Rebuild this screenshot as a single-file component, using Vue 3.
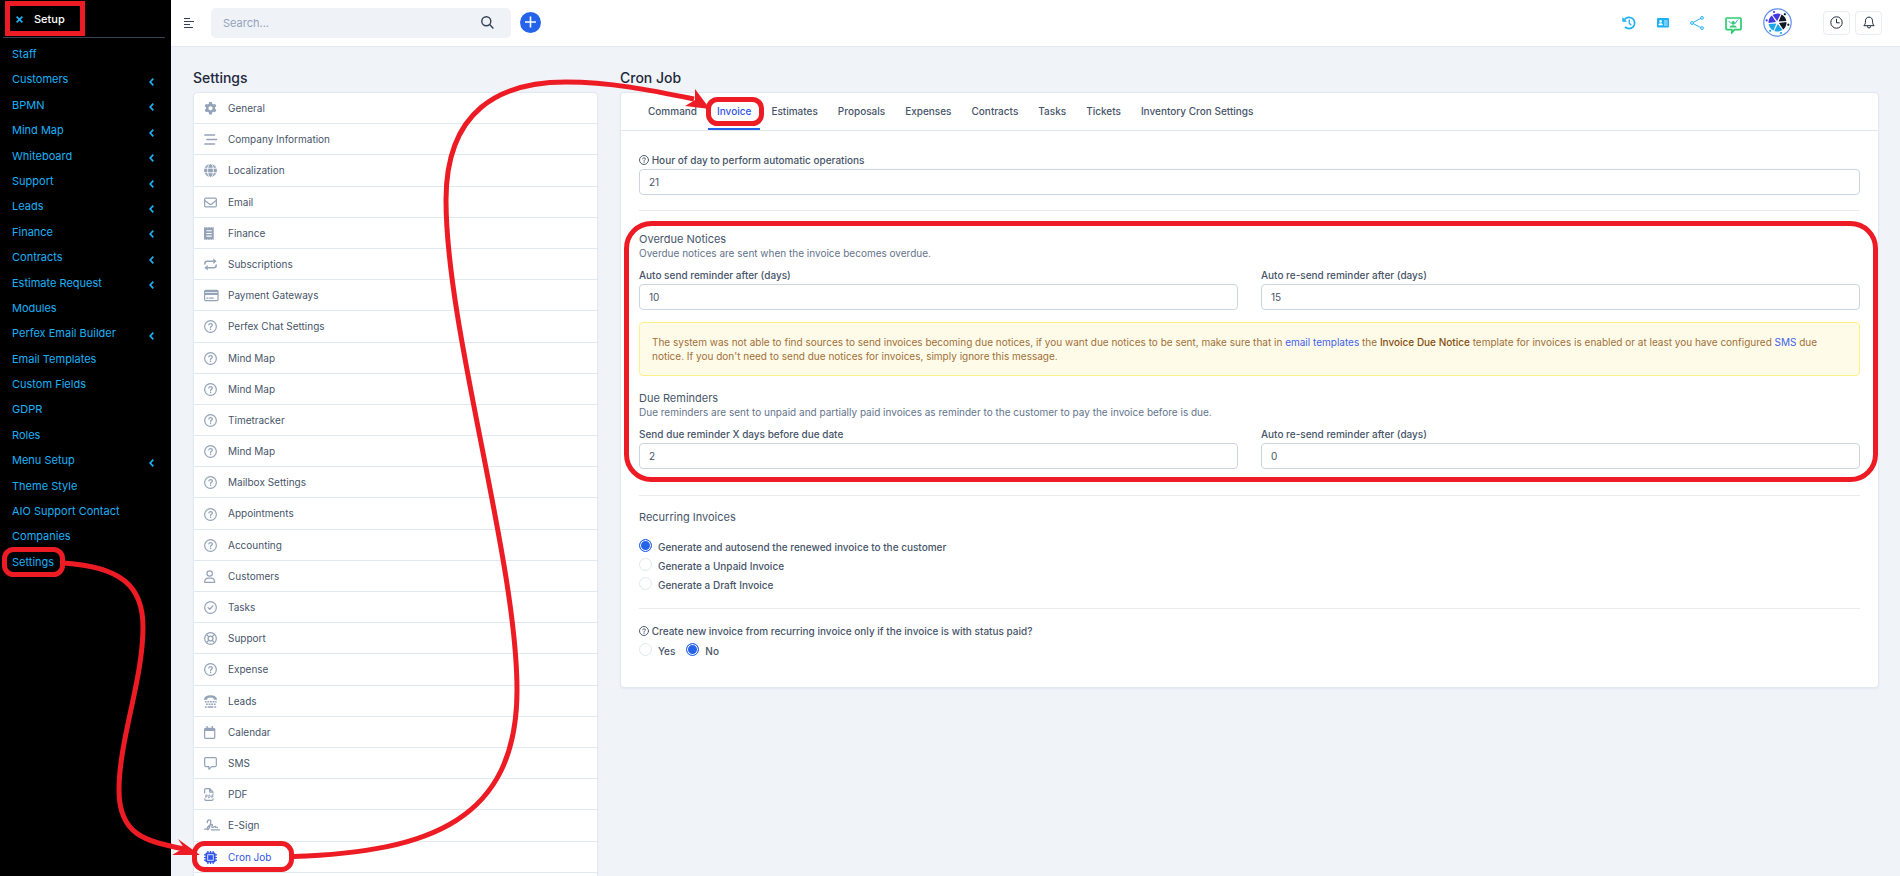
<script setup>
import { ref } from 'vue'

const menu = [
  { label: 'Staff' },
  { label: 'Customers', sub: true },
  { label: 'BPMN', sub: true },
  { label: 'Mind Map', sub: true },
  { label: 'Whiteboard', sub: true },
  { label: 'Support', sub: true },
  { label: 'Leads', sub: true },
  { label: 'Finance', sub: true },
  { label: 'Contracts', sub: true },
  { label: 'Estimate Request', sub: true },
  { label: 'Modules' },
  { label: 'Perfex Email Builder', sub: true },
  { label: 'Email Templates' },
  { label: 'Custom Fields' },
  { label: 'GDPR' },
  { label: 'Roles' },
  { label: 'Menu Setup', sub: true },
  { label: 'Theme Style' },
  { label: 'AIO Support Contact' },
  { label: 'Companies' },
  { label: 'Settings' },
]

const groups = [
  ['General', 'gear'],
  ['Company Information', 'bars'],
  ['Localization', 'globe'],
  ['Email', 'mail'],
  ['Finance', 'receipt'],
  ['Subscriptions', 'repeat'],
  ['Payment Gateways', 'card'],
  ['Perfex Chat Settings', 'help'],
  ['Mind Map', 'help'],
  ['Mind Map', 'help'],
  ['Timetracker', 'help'],
  ['Mind Map', 'help'],
  ['Mailbox Settings', 'help'],
  ['Appointments', 'help'],
  ['Accounting', 'help'],
  ['Customers', 'user'],
  ['Tasks', 'check'],
  ['Support', 'ring'],
  ['Expense', 'help'],
  ['Leads', 'tty'],
  ['Calendar', 'calendar'],
  ['SMS', 'message'],
  ['PDF', 'pdf'],
  ['E-Sign', 'sign'],
  ['Cron Job', 'chip'],
]

const line = 'fill="none" stroke="currentColor" stroke-linecap="round" stroke-linejoin="round"'
const icons = {
  gear: '<path fill="currentColor" fill-rule="evenodd" d="M6.4 0h3.2l.5 2.2 1.4.8 2.1-.7 1.6 2.8-1.6 1.5v1.8l1.6 1.5-1.6 2.8-2.1-.7-1.4.8-.5 2.7H6.4l-.5-2.7-1.4-.8-2.1.7L.8 9.9l1.6-1.5V6.600L.8 5.100l1.600-2.800 2.100.7 1.400-.8zM8 5.200a2.600 2.600 0 1 0 0 5.200 2.600 2.600 0 0 0 0-5.200z"/>',
  bars: `<g ${line} stroke-width="1.8"><path d="M1 2.500h12M3.500 8h12M1 13.500h12"/></g>`,
  globe: '<circle cx="8" cy="8" r="8" fill="currentColor"/><g fill="none" stroke="#fff" stroke-width="1.100"><ellipse cx="8" cy="8" rx="3.600" ry="8.500"/><path d="M0 5.200h16M0 10.800h16"/></g>',
  mail: `<g ${line} stroke-width="1.500"><rect x=".8" y="2.500" width="14.400" height="11" rx="1.500"/><path d="M1 5.500l5.600 4.300a2.300 2.300 0 0 0 2.800 0L15 5.500"/></g>`,
  receipt: '<path fill="currentColor" fill-rule="evenodd" d="M0 0l1.500 1L3 0l1.500 1L6 0l1.500 1L9 0l1.500 1L12 0v16l-1.500-1L9 16l-1.500-1L6 16l-1.500-1L3 16l-1.500-1L0 16zM3 4v1.300h6.500V4zm0 3.300v1.300h6.500V7.300zm0 3.300V12h6.500v-1.400z"/>',
  repeat: `<g ${line} stroke-width="1.800"><path d="M1 7.500V7a3 3 0 0 1 3-3h8M15 8.500V9a3 3 0 0 1-3 3H4"/></g><path fill="currentColor" d="M11.500.5L15.500 4l-4 3.500zM4.500 8.500L.5 12l4 3.500z"/>`,
  card: '<path fill="currentColor" fill-rule="evenodd" d="M2 1h14a2 2 0 0 1 2 2v10a2 2 0 0 1-2 2H2a2 2 0 0 1-2-2V3a2 2 0 0 1 2-2zM1.500 4v1h15V4zm0 3.500v5.500c0 .3.200.5.5.5h14c.3 0 .5-.2.5-.5V7.500zM3 10.500h2.500V12H3zm3.500 0H12V12H6.500z"/>',
  help: `<g ${line} stroke-width="1.500"><circle cx="8" cy="8" r="7.200"/><path d="M5.900 6.100c.2-1.100 1-1.600 2.200-1.600 1.300 0 2.200.7 2.200 1.800 0 1.500-2.200 1.500-2.200 3"/></g><circle cx="8.100" cy="11.500" r="1" fill="currentColor"/>`,
  user: `<g ${line} stroke-width="1.500"><circle cx="7" cy="4.300" r="3.300"/><path d="M.8 15.200c0-3 1.900-5.200 4.700-5.200h3c2.800 0 4.700 2.200 4.700 5.200z"/></g>`,
  check: `<g ${line} stroke-width="1.500"><circle cx="8" cy="8" r="7.200"/><path d="M5 8.200l2.100 2L11 6"/></g>`,
  ring: `<g ${line} stroke-width="1.500"><circle cx="8" cy="8" r="7.200"/><circle cx="8" cy="8" r="3"/><path d="M3 3l2.900 2.900M13 3l-2.900 2.900M3 13l2.900-2.900M13 13l-2.900-2.900"/></g>`,
  tty: '<path fill="currentColor" d="M0 5C.500 2 3.500.3 8 .3S15.500 2 16 5l-.5 1.200-3.600-.7-.5-1.800a9 9 0 0 0-6.800 0l-.5 1.800-3.600.7z"/><path fill="none" stroke="currentColor" stroke-width="1.800" stroke-dasharray="2.200 1" d="M1 8.300h14.500M2.500 11.500h12"/><path stroke="currentColor" stroke-width="1.800" d="M1 14.800h2.300M4.500 14.800h7M12.700 14.800H15"/>',
  calendar: '<path fill="currentColor" fill-rule="evenodd" d="M3 0h1.600v2h4.800V0H11v2h1a2 2 0 0 1 2 2v10a2 2 0 0 1-2 2H2a2 2 0 0 1-2-2V4a2 2 0 0 1 2-2h1zM1.500 6v8c0 .3.200.5.5.5h10c.3 0 .5-.2.5-.5V6z"/>',
  message: `<g ${line} stroke-width="1.500"><path d="M2.300.8h11.400c.8 0 1.500.7 1.500 1.500v8c0 .8-.7 1.500-1.500 1.500H9.500L6 15v-3.200H2.300c-.8 0-1.500-.7-1.500-1.500v-8c0-.8.700-1.500 1.500-1.500z"/></g>`,
  pdf: `<g ${line} stroke-width="1.500"><path d="M.8 6V2.300C.8 1.500 1.500.8 2.300.8H7L11 4.800V6M7 1v4h4M.8 13.500c0 1 .7 1.700 1.500 1.700h7.400c.8 0 1.500-.7 1.500-1.700"/><path d="M2.300 12V8.500h1a1 1 0 0 1 0 2h-1M6 12V8.500c2.400-.2 2.400 3.700 0 3.500M9.800 12V8.500h1.700M9.800 10.300h1.300" stroke-width="1.200"/></g>`,
  sign: `<g ${line} stroke-width="1.600"><path d="M.8 12.500h1.700M9 13.500H19M4 4.500C4 2.300 5.200 1 6.800 1 9.500 1 8 6 7 9.500 6.300 12 5 14 4 12.800c-1-1.500 1.500-4.500 4.500-5.800 2-.8 2.300 0 1.500 1.500-.7 1.500 0 2.300 1 2l2-1.300c.8-.4 1.200.200 1.200 1 .8 0 1.500-.5 2.300.3"/></g>`,
  chip: '<path fill="none" stroke="currentColor" stroke-width="1.500" d="M4.800 0v16M8 0v16M11.200 0v16M0 4.800h16M0 8h16M0 11.200h16"/><rect x="1.800" y="1.800" width="12.400" height="12.400" rx="1.800" fill="currentColor"/><rect x="4.600" y="4.600" width="6.800" height="6.800" fill="currentColor" stroke="#fff"/>',
}

const tabs = ['Command', 'Invoice', 'Estimates', 'Proposals', 'Expenses', 'Contracts', 'Tasks', 'Tickets', 'Inventory Cron Settings']
const activeTab = ref('Invoice')
const hour = ref('21')
const overdueAfter = ref('10')
const overdueResend = ref('15')
const dueBefore = ref('2')
const dueResend = ref('0')
const recurring = ref('send')
const onlyPaid = ref('no')
const recurringOptions = [
  ['send', 'Generate and autosend the renewed invoice to the customer'],
  ['unpaid', 'Generate a Unpaid Invoice'],
  ['draft', 'Generate a Draft Invoice'],
]
const slices = [
  [0, '#4338e0'], [60, '#111827'], [120, '#111827'], [180, '#1ba8e8'], [240, '#1ba8e8'], [300, '#4338e0'],
]
</script>

<template>
  <div class="screen">
    <aside class="sidebar">
      <div class="setup">
        <button class="close" aria-label="Close setup">
          <svg width="7" height="7" viewBox="0 0 6 6"><path d="M.5.500l5 5M5.500.500l-5 5" stroke="currentColor" stroke-width="1.400" /></svg>
        </button>
        <span>Setup</span>
      </div>
      <nav>
        <a v-for="m in menu" :key="m.label" href="#" class="menu-link">
          {{ m.label }}
          <svg v-if="m.sub" class="chev" width="5" height="8" viewBox="0 0 5 8"><path d="M4.300.7L1.200 4l3.100 3.300" fill="none" stroke="currentColor" stroke-width="1.700" /></svg>
        </a>
      </nav>
    </aside>

    <div class="page">
      <header class="topbar">
        <button class="plain" aria-label="Toggle menu">
          <svg width="10" height="10" viewBox="0 0 10 10"><path d="M0 .5h6M0 3.500h10M0 6.500h6M0 9.500h9" stroke="#334155" stroke-width="1.200" /></svg>
        </button>
        <div class="search">
          <input type="search" placeholder="Search..." aria-label="Search" />
          <svg width="13" height="13" viewBox="0 0 13 13" fill="none" stroke="#334155" stroke-width="1.400"><circle cx="5.300" cy="5.300" r="4.500" /><path d="M8.600 8.600l3.800 3.800" /></svg>
        </div>
        <button class="plain plus" aria-label="Create">
          <svg width="21" height="21" viewBox="0 0 21 21"><circle cx="10.500" cy="10.500" r="10.500" fill="#2563eb" /><path d="M10.500 4.500v11M5 10h11" stroke="#fff" stroke-width="1.600" /></svg>
        </button>
        <div class="tools">
          <button class="plain" aria-label="History">
            <svg width="14" height="14" viewBox="0 0 14 14" fill="none" stroke="#1cb0f6"><path d="M2.600 3.600A5.600 5.600 0 1 1 3 10.800" stroke-width="1.700" /><path d="M7.300 3.600v3.700l2 2" stroke-width="1.300" /><path d="M.3 1v4.700H5z" fill="#1cb0f6" stroke="none" /></svg>
          </button>
          <button class="plain" aria-label="Contact card">
            <svg width="12" height="10" viewBox="0 0 12 10"><rect width="12" height="9.500" rx="1.200" fill="#1cb0f6" /><circle cx="3.600" cy="3.400" r="1.300" fill="#fff" /><path d="M1.400 7.300c0-2.600 4.400-2.600 4.400 0z" fill="#fff" /><path d="M7 3h3.600M7 5h3.600M7 7h3.600" stroke="#fff" stroke-width=".8" /></svg>
          </button>
          <button class="plain" aria-label="Share">
            <svg width="14" height="14" viewBox="0 0 14 14" fill="none" stroke="#1cb0f6"><path d="M3.200 6.400l7.600-4M3.200 7.600l7.600 4" /><circle cx="2" cy="7" r="1.400" /><circle cx="12" cy="1.900" r="1.400" /><circle cx="12" cy="12.100" r="1.400" /></svg>
          </button>
          <button class="plain chat" aria-label="Chat">
            <svg width="17" height="17" viewBox="0 0 17 17" fill="none" stroke="#2ecc71"><path d="M1.800 1h13.400c.5 0 .8.300.8.800v10c0 .5-.3.800-.8.800H9.500L6.800 15.800v-3.200h-5c-.500 0-.8-.3-.8-.8v-10c0-.5.300-.8.800-.8z" stroke-width="1.700" /><path d="M4.500 10.600c.3-3 7-3 7.300 0z" fill="#2ecc71" stroke="none" /><circle cx="8.100" cy="5.900" r="1.800" fill="#2ecc71" stroke="none" /><path d="M3.800 4l2 2.500M13 2.500L9.700 7" stroke="#38a9c9" /></svg>
          </button>
          <button class="plain avatar" aria-label="Profile">
            <svg width="29" height="29" viewBox="-14.500 -14.500 29 29">
              <circle r="13.700" fill="#fff" stroke="#5b8def" stroke-width="1.200" />
              <g v-for="[angle, color] in slices" :key="angle" :transform="`rotate(${angle})`">
                <path d="M-.3-1.500L-5-7.500Q-1-10 3.200-8.400z" :fill="color" />
                <circle cx="-3.500" cy="-10.500" r="1.100" :fill="color" />
              </g>
            </svg>
          </button>
          <button class="boxed" aria-label="Timers">
            <svg width="13" height="13" viewBox="0 0 13 13" fill="none" stroke="#1e293b"><circle cx="6.500" cy="6.500" r="5.700" /><path d="M6.500 2.800v4h3.200" /></svg>
          </button>
          <button class="boxed" aria-label="Notifications">
            <svg width="12" height="13" viewBox="0 0 12 13" fill="none" stroke="#1e293b"><path d="M.9 9.700c1-1 1.600-2.200 1.600-5C2.500 2.600 4 1.100 6 1.100s3.500 1.500 3.500 3.600c0 2.800.6 4 1.600 5z" /><path d="M4.400 10.200a1.600 1.800 0 0 0 3.200 0" /></svg>
          </button>
        </div>
      </header>

      <main class="row">
        <section class="col-side">
          <h1 class="title">Settings</h1>
          <nav class="panel groups">
            <a v-for="([label, icon], i) in groups" :key="i" href="#" class="group" :class="{ active: label === 'Cron Job' }">
              <svg class="gi" viewBox="0 0 16 16" width="13" height="13" v-html="icons[icon]"></svg>
              <span>{{ label }}</span>
            </a>
          </nav>
        </section>

        <section class="col-main">
          <h1 class="title">Cron Job</h1>
          <div class="panel">
            <div class="tabs" role="tablist">
              <button v-for="t in tabs" :key="t" role="tab" :aria-selected="t === activeTab" class="tab" :class="{ on: t === activeTab }" @click="activeTab = t">{{ t }}</button>
            </div>
            <form class="form" @submit.prevent>
              <label for="hour"><svg class="q" viewBox="0 0 16 16" width="10" height="10" v-html="icons.help"></svg> Hour of day to perform automatic operations</label>
              <input id="hour" v-model="hour" class="field" type="text" />
              <hr />

              <h2 class="first">Overdue Notices</h2>
              <p>Overdue notices are sent when the invoice becomes overdue.</p>
              <div class="pair">
                <div>
                  <label for="o1">Auto send reminder after (days)</label>
                  <input id="o1" v-model="overdueAfter" class="field" type="text" />
                </div>
                <div>
                  <label for="o2">Auto re-send reminder after (days)</label>
                  <input id="o2" v-model="overdueResend" class="field" type="text" />
                </div>
              </div>
              <div class="alert">
                The system was not able to find sources to send invoices becoming due notices, if you want due notices to be sent, make sure that in <a href="#">email templates</a> the <b>Invoice Due Notice</b> template for invoices is enabled or at least you have configured <a href="#">SMS</a> due notice. If you don't need to send due notices for invoices, simply ignore this message.
              </div>

              <h2>Due Reminders</h2>
              <p>Due reminders are sent to unpaid and partially paid invoices as reminder to the customer to pay the invoice before is due.</p>
              <div class="pair last">
                <div>
                  <label for="d1">Send due reminder X days before due date</label>
                  <input id="d1" v-model="dueBefore" class="field" type="text" />
                </div>
                <div>
                  <label for="d2">Auto re-send reminder after (days)</label>
                  <input id="d2" v-model="dueResend" class="field" type="text" />
                </div>
              </div>
              <hr />

              <h2 class="recurring">Recurring Invoices</h2>
              <div v-for="[value, text] in recurringOptions" :key="value" class="choice">
                <input :id="value" v-model="recurring" type="radio" name="recurring" :value="value" />
                <label :for="value">{{ text }}</label>
              </div>
              <hr class="tight" />

              <div class="question"><svg class="q" viewBox="0 0 16 16" width="10" height="10" v-html="icons.help"></svg> Create new invoice from recurring invoice only if the invoice is with status paid?</div>
              <div class="choice">
                <input id="yes" v-model="onlyPaid" type="radio" name="paid" value="yes" />
                <label for="yes">Yes</label>
                <input id="no" v-model="onlyPaid" type="radio" name="paid" value="no" />
                <label for="no">No</label>
              </div>
            </form>
          </div>
        </section>
      </main>
    </div>

    <svg class="marks" width="1900" height="876" viewBox="0 0 1900 876" aria-hidden="true">
      <g fill="none" stroke="#ed1c24" stroke-width="5">
        <rect x="7.500" y="3.500" width="75" height="30" />
        <rect x="4.500" y="549.500" width="58" height="25" rx="9" />
        <rect x="194.500" y="843.500" width="97" height="26" rx="10" />
        <rect x="708.500" y="99.500" width="53" height="24" rx="9" />
        <rect x="626.500" y="223.500" width="1249" height="256" rx="25" />
        <path d="M64 563C120 567 143 585 143 627C143 680 119 740 119 790C119 835 145 841 184 849" />
        <path d="M293 856.500C430 852 517 820 517 690C517 560 446 330 446 200C446 110 500 82 566 82C610 82 650 90 694 99" />
      </g>
      <path d="M178 839L200 855L172 855L184 848zM695 89L710 109L685 106L695 100z" fill="#ed1c24" />
    </svg>
  </div>
</template>

<style>
body { background: #f0f3f8; }
</style>

<style scoped>
.screen { position: relative; display: flex; height: 100vh; overflow: hidden; font-family: Inter, "Liberation Sans", sans-serif; font-size: 11px; color: #475569; background: #f0f3f8; }
.screen *, .screen *::before { box-sizing: border-box; }
a { text-decoration: none; }
button, input { font: inherit; }
button { cursor: pointer; }
svg { display: block; flex: none; }
.marks { position: absolute; left: 0; top: 0; pointer-events: none; }

.sidebar { width: 171px; flex: none; background: #000; color: #1cb0f6; }
.setup { display: flex; align-items: center; gap: 11px; height: 38px; margin: 0 6px 0 3px; padding: 1px 0 0 13px; border-bottom: 1px solid #334155; color: #fff; font-weight: 500; }
.close { border: 0; padding: 0; background: none; color: #1cb0f6; }
.sidebar nav { padding-top: 4px; }
.menu-link { display: flex; justify-content: space-between; align-items: center; padding: 5px 17px 5px 12px; line-height: 1.4; color: #1cb0f6; }
.chev { margin-top: 4px; }

.page { flex: 1; min-width: 0; }
.topbar { display: flex; align-items: center; height: 47px; padding: 0 18px 1px 13px; background: #fff; border-bottom: 1px solid #e2e8f0; }
.plain { display: block; border: 0; padding: 0; background: none; }
.search { display: flex; align-items: center; width: 300px; height: 30px; margin-left: 17px; padding: 0 17px 0 12px; border-radius: 5px; background: #eff2f7; }
.search input { flex: 1; min-width: 0; border: 0; padding: 0; outline: 0; background: none; color: #475569; }
.search input::placeholder { color: #94a3b8; opacity: 1; }
.plus { margin-left: 9px; }
.tools { display: flex; align-items: center; margin-left: auto; }
.tools .plain { margin-right: 21px; }
.tools .chat { padding-top: 5px; }
.tools .avatar { margin-right: 31px; }
.boxed { display: grid; place-items: center; width: 27px; height: 24px; padding: 0; border: 1px solid #e8ecf3; border-radius: 4px; background: #fff; }
.boxed + .boxed { margin-left: 5px; }

.row { display: flex; align-items: flex-start; padding: 21px 10px 0 11px; font-size: 10px; }
.col-side { width: 25%; padding: 0 11px; }
.col-main { width: 75%; padding: 0 11px; }
.title { margin: 0 0 4px; font-size: 14px; font-weight: 500; line-height: 20px; color: #1e293b; }
.panel { background: #fff; border: 1px solid #e2e8f0; border-radius: 4px; box-shadow: 0 1px 2px #e2e8f0; }

.groups { padding-bottom: 32px; }
.group { display: flex; align-items: center; padding: 8px 10px 7px; border-bottom: 1px solid #e2e8f0; line-height: 1.52; color: #475569; }
.group span { margin-left: 11px; }
.gi { overflow: visible; color: #94a3b8; }
.group.active, .group.active .gi { color: #2f54eb; }

.tabs { display: flex; gap: 2px; padding: 0 18px; border-bottom: 1px solid #e2e8f0; }
.tab { height: 37px; padding: 0 9px; border: 0; border-bottom: 2px solid transparent; background: none; color: #475569; font-weight: 500; }
.tab.on { color: #2f54eb; border-bottom-color: #2563eb; }

.form { padding: 20px 18px 28px; }
label, .question { display: block; line-height: 18px; font-weight: 500; color: #475569; }
.q { display: inline-block; vertical-align: -1px; }
.field { display: block; width: 100%; height: 26px; padding: 0 9px; border: 1px solid #cbd5e1; border-radius: 4px; outline: 0; background: #fff; color: #475569; }
hr { height: 1px; margin: 15px 0 14px; border: 0; background: #e8ebef; }
hr.tight { margin: 15px 0 13px; }
h2 { margin: 0; font-size: 11px; line-height: 14px; font-weight: 400; color: #475569; }
h2.first { margin-top: 21px; }
h2.recurring { margin-bottom: 12px; }
p { margin: 0 0 6px; line-height: 14px; color: #64748b; }
.pair { display: grid; grid-template-columns: 1fr 1fr; gap: 23px; }
.pair.last { margin-bottom: 26px; }
.alert { margin: 12px 0 15px; padding: 12px 26px 12px 12px; border: 1px solid #fef08a; border-radius: 4px; background: #fefce8; line-height: 14px; color: #a16f3a; }
.alert a { color: #4361ee; }
.alert b { font-weight: 500; color: #854d0e; }
.choice { display: flex; align-items: center; height: 19px; }
.choice label { margin: 2px 0 0 6px; }
.choice label:not(:last-child) { margin-right: 11px; }
.choice input { appearance: none; width: 13px; height: 13px; margin: 0; border: 1px solid #e2e8f0; border-radius: 50%; background: #fff; }
.choice input:checked { border-color: #2563eb; background: #2563eb; box-shadow: inset 0 0 0 1px #fff; }
</style>
